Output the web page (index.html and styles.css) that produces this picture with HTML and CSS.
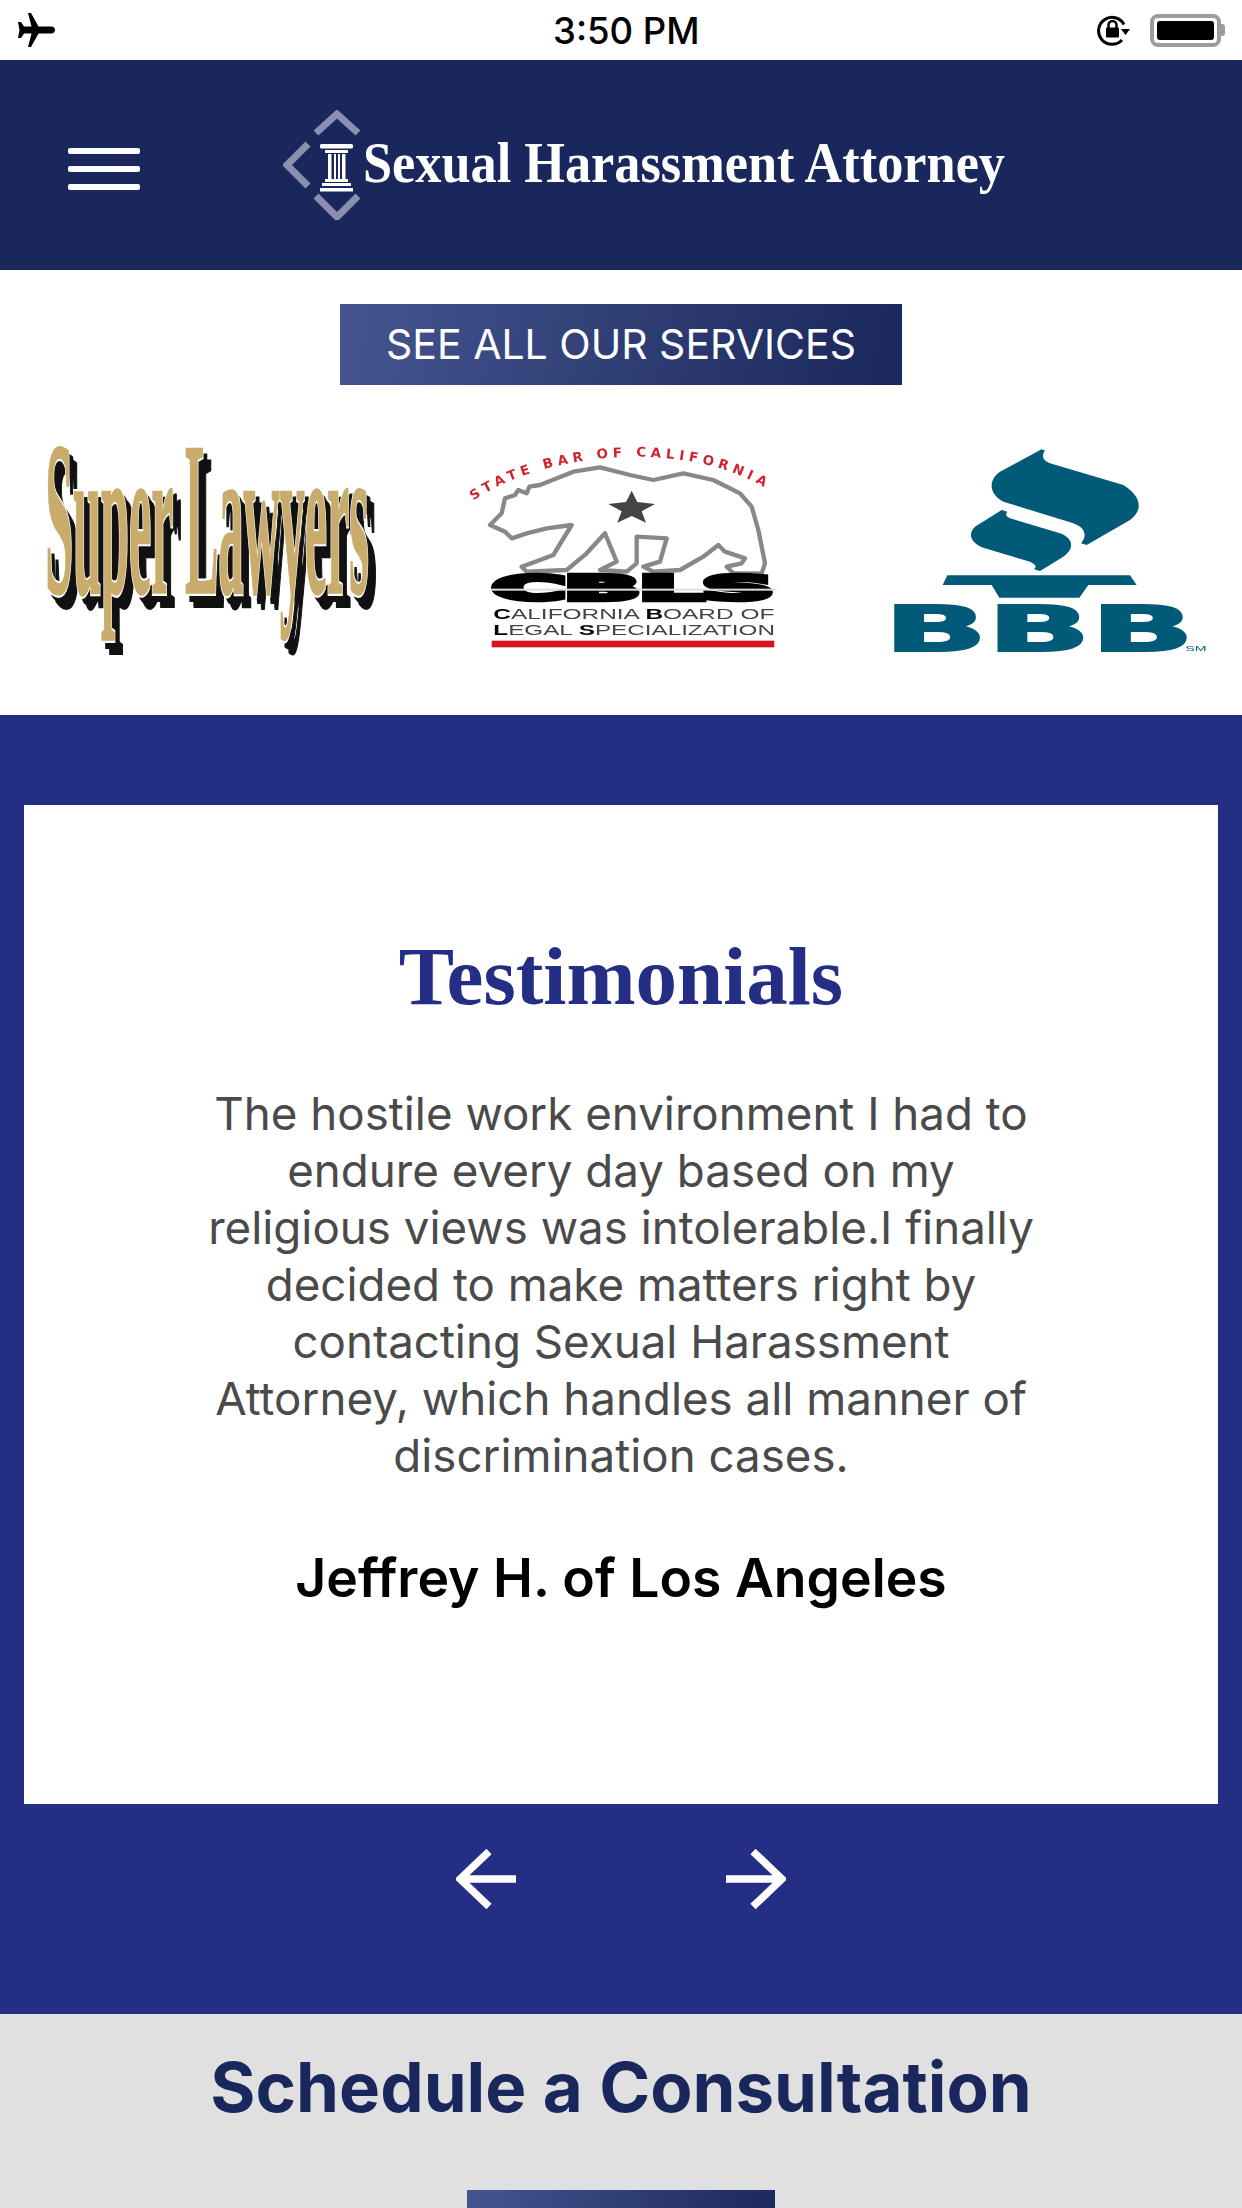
FILE: index.html
```html
<!DOCTYPE html>
<html lang="en">
<head>
<meta charset="utf-8">
<title>Sexual Harassment Attorney</title>
<link rel="stylesheet" href="styles.css">
</head>
<body>
<div class="status-bar">
  <svg class="ico-plane" viewBox="0 0 37 34"><path d="M10 0 L13 0 L20.500 13.500 L33 13.500 C36 13.500 37 15.500 37 17 C37 18.500 36 20.500 33 20.500 L20.500 20.500 L13 34 L10 34 L13.500 20.500 L6 20.500 L3 25 L0 25 L1.500 17 L0 9 L3 9 L6 13.500 L13.500 13.500 Z"/></svg>
  <span class="clock">3:50 PM</span>
  <div class="status-right">
    <svg class="ico-lock" viewBox="0 0 34 32"><path class="lock-ring" d="M25 26 A13.500 13.500 0 1 1 27 10.500"/><path d="M24 15 L33 15 L28.500 21 Z"/><rect x="9" y="13.500" width="13" height="10" rx="1"/><path class="lock-arc" d="M11.500 14 V11 A4 4 0 0 1 19.500 11 V14"/></svg>
    <div class="battery"><div class="battery-fill"></div></div>
    <div class="battery-nub"></div>
  </div>
</div>

<header class="site-header">
  <div class="burger"><span></span><span></span><span></span></div>
  <svg class="brand" viewBox="0 0 730 110" width="730" height="110">
    <g class="chev">
      <path d="M33 23 L54 4 L75 23"/>
      <path d="M25 34 L4 55 L25 76"/>
      <path d="M33 86 L54 107 L75 86"/>
    </g>
    <g class="pillar">
      <rect x="37" y="34" width="33" height="4.500" rx="1.500"/>
      <rect x="42" y="40" width="23" height="3"/>
      <rect x="45" y="44" width="3.500" height="25"/>
      <rect x="51" y="44" width="2" height="25"/>
      <rect x="55" y="44" width="2" height="25"/>
      <rect x="59" y="44" width="3.500" height="25"/>
      <rect x="42" y="69" width="23" height="3"/>
      <rect x="39" y="73" width="29" height="3"/>
      <rect x="37" y="78" width="33" height="3.500"/>
    </g>
    <text class="brand-name" x="80" y="72" textLength="642" lengthAdjust="spacingAndGlyphs">Sexual Harassment Attorney</text>
  </svg>
</header>

<main>
  <section class="intro">
    <a class="btn btn-services">SEE ALL OUR SERVICES</a>
    <div class="badges">
      <svg class="badge badge-sl" viewBox="0 0 1110 690" width="370" height="230">
        <defs><text id="sl" x="76" y="490" textLength="970" lengthAdjust="spacingAndGlyphs">Super Lawyers</text></defs>
        <use href="#sl" class="sl-shadow" x="24" y="38"/>
        <use href="#sl" class="sl-shadow" x="12" y="19"/>
        <use href="#sl" class="sl-edge"/>
        <use href="#sl" class="sl-face"/>
      </svg>
      <svg class="badge badge-cbls" viewBox="0 0 1080 690" width="360" height="230">
        <defs><path id="arc" d="M100 212 C300 70 780 0 1050 225"/></defs>
        <text class="cb-arc"><textPath href="#arc">STATE BAR OF CALIFORNIA</textPath></text>
        <path class="cb-bear" d="M150 285 L185 250 L195 205 L225 195 L235 180 L260 190 L268 170 L300 165 L400 125 L480 112 L570 135 L640 150 L730 130 L820 150 L900 190 L935 230 L955 300 L975 400 L965 430 L880 430 L860 410 L905 400 L915 385 L855 365 L835 345 L790 380 L720 420 L640 425 L610 410 L660 395 L680 325 L590 320 L590 400 L560 425 L480 420 L530 395 L495 310 L440 370 L380 420 L260 425 L245 410 L300 390 L340 375 L395 285 L320 295 L260 310 L215 325 L195 305 Z"/>
        <path class="cb-star" d="M575 182 L592 216 L645 222 L605 244 L618 278 L575 258 L532 278 L545 244 L505 222 L558 216 Z"/>
        <text class="cb-mark" x="158" y="511" textLength="842" lengthAdjust="spacingAndGlyphs">CBLS</text>
        <rect class="cb-split" x="150" y="476" width="860" height="6"/>
        <text class="cb-line" x="160" y="567" textLength="843" lengthAdjust="spacingAndGlyphs"><tspan class="cb-b">C</tspan>ALIFORNIA <tspan class="cb-b">B</tspan>OARD OF</text>
        <text class="cb-line" x="160" y="615" textLength="845" lengthAdjust="spacingAndGlyphs"><tspan class="cb-b">L</tspan>EGAL <tspan class="cb-b">S</tspan>PECIALIZATION</text>
        <rect class="cb-rule" x="155" y="632" width="848" height="20"/>
      </svg>
      <svg class="badge badge-bbb" viewBox="0 0 1110 690" width="370" height="230">
        <path class="bbb" d="M545 58 L420 125 C385 150 385 190 430 215 L640 280 C680 295 680 320 663 340 L680 345 L810 270 C850 240 845 200 790 165 L570 100 C545 90 545 75 555 62 Z"/>
        <path class="bbb" d="M425 240 L345 290 C320 315 335 340 375 355 L510 395 C530 405 530 410 522 418 L540 423 L610 380 C645 355 640 325 600 310 L450 265 C435 258 437 250 442 245 Z"/>
        <path class="bbb" d="M262 436 L810 436 L830 465 L685 465 L658 503 L418 503 L395 465 L248 465 Z"/>
        <text class="bbb bbb-word" x="72" y="662" textLength="930" lengthAdjust="spacingAndGlyphs">BBB</text>
        <text class="bbb bbb-sm" x="976" y="663" textLength="64" lengthAdjust="spacingAndGlyphs">SM</text>
      </svg>
    </div>
  </section>

  <section class="testimonials">
    <article class="card">
      <h2 class="card-title">Testimonials</h2>
      <p class="quote">The hostile work environment I had to endure every day based on my religious views was intolerable.I finally decided to make matters right by contacting Sexual Harassment Attorney, which handles all manner of discrimination cases.</p>
      <p class="author">Jeffrey H. of Los Angeles</p>
    </article>
    <div class="pager">
      <svg class="arrow" viewBox="0 0 60 60"><path d="M60 30 H3 M33 2.500 L4 30 L33 57.500"/></svg>
      <svg class="arrow" viewBox="0 0 60 60"><path d="M0 30 H57 M27 2.500 L56 30 L27 57.500"/></svg>
    </div>
  </section>

  <section class="consult">
    <h2 class="consult-title">Schedule a Consultation</h2>
    <a class="btn btn-consult"></a>
  </section>
</main>
</body>
</html>
```
FILE: styles.css
```css
* { box-sizing: border-box; }
html, body { margin: 0; padding: 0; height: 2208px; overflow: hidden; background: #fff; }
body { font-family: Inter, "Liberation Sans", sans-serif; }
p, h2 { margin: 0; }

.status-bar { height: 60px; display: flex; align-items: center; position: relative; background: #fff; padding: 0 17px 0 18px; }
.ico-plane { width: 37px; height: 34px; }
.clock { position: absolute; left: 553px; top: 13px; font: 500 36.500px/36px Inter, "Liberation Sans", sans-serif; color: #000; white-space: nowrap; }
.status-right { margin-left: auto; display: flex; align-items: center; }
.ico-lock { width: 34px; height: 32px; margin-right: 19px; }
.lock-ring { fill: none; stroke: #000; stroke-width: 3; }
.lock-arc { fill: none; stroke: #000; stroke-width: 2.500; }
.battery { width: 71px; height: 33px; border: 4px solid #9c9c9c; border-radius: 8px; padding: 3px; }
.battery-fill { width: 100%; height: 100%; background: #000; border-radius: 3px; }
.battery-nub { width: 4px; height: 12px; background: #9c9c9c; border-radius: 0 3px 3px 0; }

.site-header { height: 210px; background: #19275c; display: flex; align-items: center; padding-left: 68px; }
.burger { width: 72px; display: flex; flex-direction: column; gap: 12px; margin-top: 8px; }
.burger span { display: block; height: 6px; background: #fff; border-radius: 2px; }
.brand { margin-left: 143px; flex: none; }
.chev path { fill: none; stroke: #8a90ae; stroke-width: 7; }
.pillar rect { fill: #fff; }
.brand-name { font: 700 58px "Liberation Serif", serif; fill: #fff; }

.intro { height: 445px; display: flex; flex-direction: column; align-items: center; padding-top: 34px; background: #fff; }
.btn { display: block; background: linear-gradient(100deg, #46558f 0%, #19275c 100%); }
.btn-services { width: 562px; height: 81px; color: #fff; font-size: 41px; line-height: 81px; text-align: center; white-space: nowrap; }
.badges { align-self: stretch; display: flex; margin-top: 45px; padding-left: 20px; }
.badge { flex: none; filter: blur(0.5px); }
.badge-cbls { margin-left: 50px; }
.badge-bbb { margin-left: 60px; }

.sl-shadow, .sl-edge, .sl-face { font: 700 660px "Liberation Serif", serif; }
#sl { font: 700 660px "Liberation Serif", serif; }
.sl-shadow { fill: #111; stroke: #111; stroke-width: 12; }
.sl-edge { fill: #fff; stroke: #fff; stroke-width: 18; }
.sl-face { fill: #c9ac6c; stroke: #c9ac6c; stroke-width: 5; }

.cb-arc { font: 700 40px "DejaVu Sans", sans-serif; fill: #d0232f; letter-spacing: 14px; }
.cb-bear { fill: none; stroke: #888; stroke-width: 13; stroke-linejoin: round; }
.cb-star { fill: #444; }
.cb-mark { font: 700 102px "DejaVu Sans", sans-serif; fill: #000; stroke: #000; stroke-width: 14; }
.cb-split { fill: #ddd; }
.cb-line { font: 400 42px "Liberation Sans", sans-serif; fill: #444; }
.cb-b { font-weight: 700; fill: #000; }
.cb-rule { fill: #d6131f; }

.bbb { fill: #005a78; }
.bbb-word { font: 700 186px "DejaVu Sans", sans-serif; stroke: #005a78; stroke-width: 6; }
.bbb-sm { font: 400 20px "Liberation Sans", sans-serif; }

.testimonials { height: 1299px; background: #232e84; padding: 90px 24px 0; }
.card { height: 999px; background: #fff; text-align: center; padding-top: 125px; }
.card-title { font: 700 83px/92px "Liberation Serif", serif; color: #232e84; }
.quote { width: 840px; margin: 63px auto 0; font-size: 45.700px; line-height: 57px; color: #4a4a4a; }
.author { margin-top: 64px; font-size: 53.500px; line-height: 60px; font-weight: 600; color: #000; }
.pager { display: flex; justify-content: center; gap: 210px; padding-top: 45px; }
.arrow { width: 60px; height: 60px; }
.arrow path { fill: none; stroke: #fff; stroke-width: 7.500; }

.consult { background: #e0e0e0; display: flex; flex-direction: column; align-items: center; padding-top: 30px; }
.consult-title { font-size: 69px; line-height: 86px; font-weight: 700; color: #19275c; }
.btn-consult { width: 308px; height: 81px; margin-top: 60px; }
```
